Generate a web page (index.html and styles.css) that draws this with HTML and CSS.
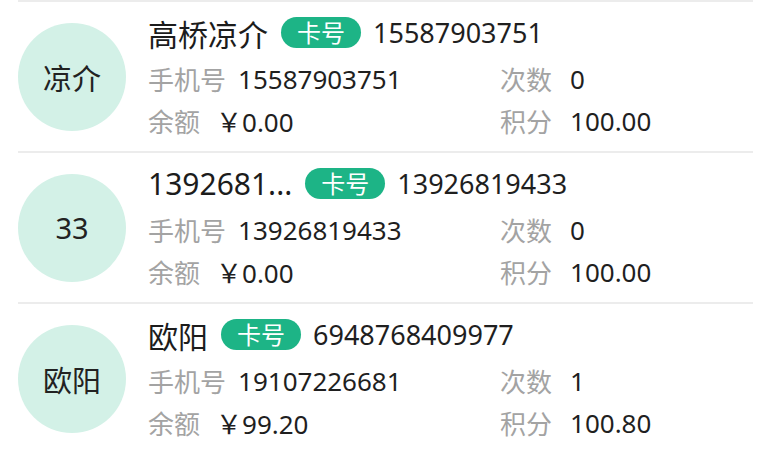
FILE: index.html
```html
<!DOCTYPE html>
<html lang="zh-CN">
<head>
<meta charset="utf-8">
<title>会员列表</title>
<link rel="stylesheet" href="styles.css">
</head>
<body>
<ul class="list">
  <li class="item">
    <div class="avatar">凉介</div>
    <div class="info">
      <div class="title"><span class="name">高桥凉介</span><span class="badge">卡号</span><span class="card">15587903751</span></div>
      <div class="stats">
        <div class="stat"><span class="label">手机号</span><span class="value">15587903751</span></div>
        <div class="stat"><span class="label">次数</span><span class="value">0</span></div>
        <div class="stat"><span class="label">余额</span><span class="value money">￥0.00</span></div>
        <div class="stat"><span class="label">积分</span><span class="value">100.00</span></div>
      </div>
    </div>
  </li>
  <li class="item">
    <div class="avatar">33</div>
    <div class="info">
      <div class="title"><span class="name">1392681...</span><span class="badge">卡号</span><span class="card">13926819433</span></div>
      <div class="stats">
        <div class="stat"><span class="label">手机号</span><span class="value">13926819433</span></div>
        <div class="stat"><span class="label">次数</span><span class="value">0</span></div>
        <div class="stat"><span class="label">余额</span><span class="value money">￥0.00</span></div>
        <div class="stat"><span class="label">积分</span><span class="value">100.00</span></div>
      </div>
    </div>
  </li>
  <li class="item">
    <div class="avatar">欧阳</div>
    <div class="info">
      <div class="title"><span class="name">欧阳</span><span class="badge">卡号</span><span class="card">6948768409977</span></div>
      <div class="stats">
        <div class="stat"><span class="label">手机号</span><span class="value">19107226681</span></div>
        <div class="stat"><span class="label">次数</span><span class="value">1</span></div>
        <div class="stat"><span class="label">余额</span><span class="value money">￥99.20</span></div>
        <div class="stat"><span class="label">积分</span><span class="value">100.80</span></div>
      </div>
    </div>
  </li>
</ul>
</body>
</html>
```
FILE: styles.css
```css
* {
  box-sizing: border-box;
}

html, body {
  margin: 0;
  padding: 0;
  background: #ffffff;
}

body {
  font-family: "Noto Sans", "Noto Sans CJK SC", sans-serif;
  color: #1f1f1f;
  overflow: hidden;
}

.list {
  list-style: none;
  margin: 0 18px;
  padding: 0;
}

.item {
  display: flex;
  align-items: center;
  height: 151px;
  border-top: 2px solid #ececec;
}

.avatar {
  flex: none;
  width: 108px;
  height: 108px;
  border-radius: 50%;
  background: #d3f1e7;
  display: flex;
  align-items: center;
  justify-content: center;
  font-size: 29px;
  color: #222222;
  margin-right: 22px;
}

.info {
  flex: 1;
  padding-top: 1px;
}

.title {
  display: flex;
  align-items: center;
  height: 40px;
  white-space: nowrap;
}

.name {
  font-size: 30px;
  color: #1c1c1c;
  margin-right: 13px;
}

.badge {
  height: 31px;
  line-height: 31px;
  padding: 0 16px;
  border-radius: 16px;
  background: #1db486;
  color: #ffffff;
  font-size: 24px;
}

.card {
  font-size: 27px;
  margin-left: 12px;
  color: #1f1f1f;
}

.stats {
  display: grid;
  grid-template-columns: 352px 1fr;
  grid-auto-rows: 42px;
  margin-top: 5px;
}

.stat {
  display: flex;
  align-items: center;
  gap: 12px;
  font-size: 26px;
  white-space: nowrap;
}

.label {
  color: #a3a3a3;
}

.value {
  color: #1f1f1f;
}

.stat:nth-child(even) {
  gap: 18px;
}

.money {
  margin-left: 4px;
}
```
